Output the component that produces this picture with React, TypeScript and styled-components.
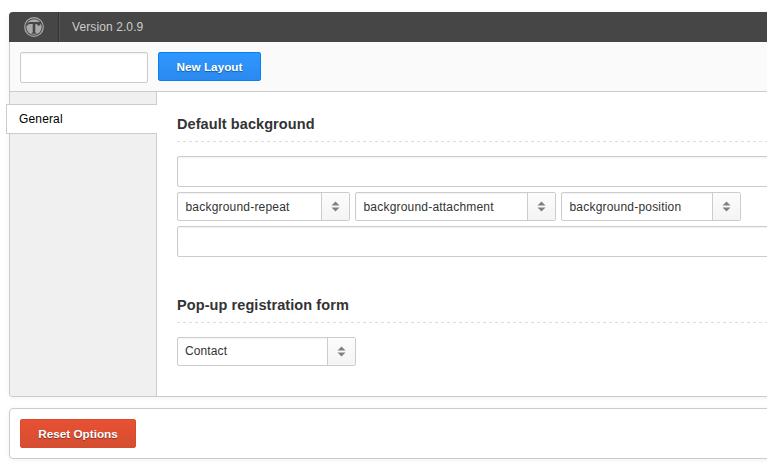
import React from "react";
import styled, { createGlobalStyle } from "styled-components";

const GlobalStyle = createGlobalStyle`
  * { box-sizing: border-box; }
  html, body { margin: 0; background: #fff; overflow: hidden; }
  body { font: 12px/18px "Liberation Sans", Arial, sans-serif; color: #333; }
`;

const Page = styled.main`
  width: 800px;
  height: 475px;
  padding: 12px 0 0 9px;
`;

const Panel = styled.section`
  border: 1px solid #ccc;
  border-top: 0;
  border-radius: 4px;
  box-shadow: 0 1px 5px rgba(0, 0, 0, 0.06);
`;

const Header = styled.header`
  display: flex;
  align-items: center;
  height: 30px;
  margin: 0 -1px;
  background: #464646;
  border-radius: 4px 0 0 0;
  color: #ccc;
`;

const LogoCell = styled.div`
  display: flex;
  align-items: center;
  justify-content: center;
  width: 50px;
  height: 30px;
  border-right: 1px solid #333;
  box-shadow: 1px 0 0 #555;
`;

const Version = styled.span`
  margin-left: 13px;
  letter-spacing: 0.1px;
`;

const Toolbar = styled.div`
  display: flex;
  align-items: flex-start;
  gap: 10px;
  height: 50px;
  padding: 10px;
  background: #fafafa;
  border-bottom: 1px solid #ccc;
`;

const TextInput = styled.input<{ $width?: string }>`
  display: block;
  width: ${({ $width }) => $width ?? "100%"};
  height: 31px;
  padding: 0 8px;
  border: 1px solid #ccc;
  border-radius: 2px;
  background: #fff;
  box-shadow: inset 0 1px 2px rgba(0, 0, 0, 0.06);
  font: inherit;
  outline: none;
`;

const Button = styled.button<{ $tone: "blue" | "red"; $width: number }>`
  width: ${({ $width }) => $width}px;
  height: 29px;
  padding: 0;
  border: 1px solid ${({ $tone }) => ($tone === "blue" ? "#0a80ee" : "#d94b2e")};
  border-radius: 2px;
  background: ${({ $tone }) =>
    $tone === "blue"
      ? "linear-gradient(#2e97ff, #2b8af0)"
      : "linear-gradient(#e85033, #d54e31)"};
  color: #fff;
  font: bold 11.75px/27px "Liberation Sans", Arial, sans-serif;
  text-shadow: 0 1px 1px rgba(0, 0, 0, 0.4);
  white-space: nowrap;
`;

const Body = styled.div`
  display: flex;
  height: 304px;
`;

const Sidebar = styled.nav`
  flex: none;
  width: 147px;
  padding-top: 12px;
  background: #f0f0f0;
  border-right: 1px solid #ccc;
  border-radius: 0 0 0 3px;
`;

const Tab = styled.div`
  height: 30px;
  margin: 0 -1px 0 -4px;
  padding-left: 12px;
  border: 1px solid #ccc;
  border-right: 0;
  background: #fff;
  color: #000;
  line-height: 28px;
  letter-spacing: 0.15px;
`;

const Content = styled.div`
  flex: 1;
  padding-left: 20px;
`;

const Group = styled.section<{ $height: number }>`
  height: ${({ $height }) => $height}px;
`;

const Heading = styled.h3`
  height: 50px;
  margin: 0 0 14px;
  padding-top: 23px;
  background: repeating-linear-gradient(90deg, #ddd 0 3px, transparent 3px 6px) bottom / 100% 1px no-repeat;
  font-size: 14.5px;
  line-height: 18px;
  letter-spacing: 0.08px;
`;

const SelectRow = styled.div`
  display: flex;
  gap: 5px;
  margin: 5px 0;
`;

const SelectBox = styled.div<{ $width: number }>`
  display: flex;
  width: ${({ $width }) => $width}px;
  height: 29px;
  border: 1px solid #ccc;
  border-radius: 2px;
  background: #fff;
  box-shadow: inset 0 1px 2px rgba(0, 0, 0, 0.05);
  line-height: 27px;
`;

const SelectLabel = styled.span`
  flex: 1;
  padding-left: 7px;
  letter-spacing: 0.12px;
  white-space: nowrap;

  ${SelectRow} & {
    padding-left: 7.5px;
    letter-spacing: 0.2px;
    line-height: 29px;
    height: 27px;
  }
`;

const SelectArrow = styled.span`
  display: flex;
  align-items: center;
  justify-content: center;
  width: 28px;
  border-left: 1px solid #ccc;
  background: linear-gradient(#fcfcfc, #f4f4f4);
`;

const Footer = styled.footer`
  height: 51px;
  margin-top: 11px;
  padding: 10px;
  border: 1px solid #ccc;
  border-radius: 4px;
  box-shadow: 0 1px 5px rgba(0, 0, 0, 0.06);
`;

function Logo() {
  return (
    <svg width="20" height="20" viewBox="0 0 20 20">
      <circle cx="10" cy="10" r="9.3" fill="none" stroke="#aaa" strokeWidth="1.2" />
      <circle cx="10" cy="10" r="7.7" fill="#aaa" />
      <path
        d="M2.6 9.2V7.6Q3.4 5 6 5H14.8Q16.2 5 17 4.3Q17.4 8.6 14 9Q14.2 7 11.3 7V15.2L12.8 16.7H7.2L8.7 15.2V7H6Q4.2 7 2.6 9.2Z"
        fill="#464646"
      />
    </svg>
  );
}

function Select({ label, width }: { label: string; width: number }) {
  return (
    <SelectBox $width={width}>
      <SelectLabel>{label}</SelectLabel>
      <SelectArrow>
        <svg width="9" height="11" viewBox="0 0 9 11">
          <path d="M4.5 0.5L8.5 4.5H0.5ZM0.5 6.5H8.5L4.5 10.5Z" fill="#808080" />
        </svg>
      </SelectArrow>
    </SelectBox>
  );
}

export default function App() {
  return (
    <>
      <GlobalStyle />
      <Page>
        <Panel>
          <Header>
            <LogoCell>
              <Logo />
            </LogoCell>
            <Version>Version 2.0.9</Version>
          </Header>
          <Toolbar>
            <TextInput $width="128px" aria-label="Layout name" />
            <Button $tone="blue" $width={103}>New Layout</Button>
          </Toolbar>
          <Body>
            <Sidebar>
              <Tab>General</Tab>
            </Sidebar>
            <Content>
              <Group $height={181}>
                <Heading>Default background</Heading>
                <TextInput aria-label="Background color" />
                <SelectRow>
                  <Select label="background-repeat" width={173} />
                  <Select label="background-attachment" width={201} />
                  <Select label="background-position" width={180} />
                </SelectRow>
                <TextInput aria-label="Background image" />
              </Group>
              <Group $height={123}>
                <Heading>Pop-up registration form</Heading>
                <Select label="Contact" width={179} />
              </Group>
            </Content>
          </Body>
        </Panel>
        <Footer>
          <Button $tone="red" $width={116}>Reset Options</Button>
        </Footer>
      </Page>
    </>
  );
}
